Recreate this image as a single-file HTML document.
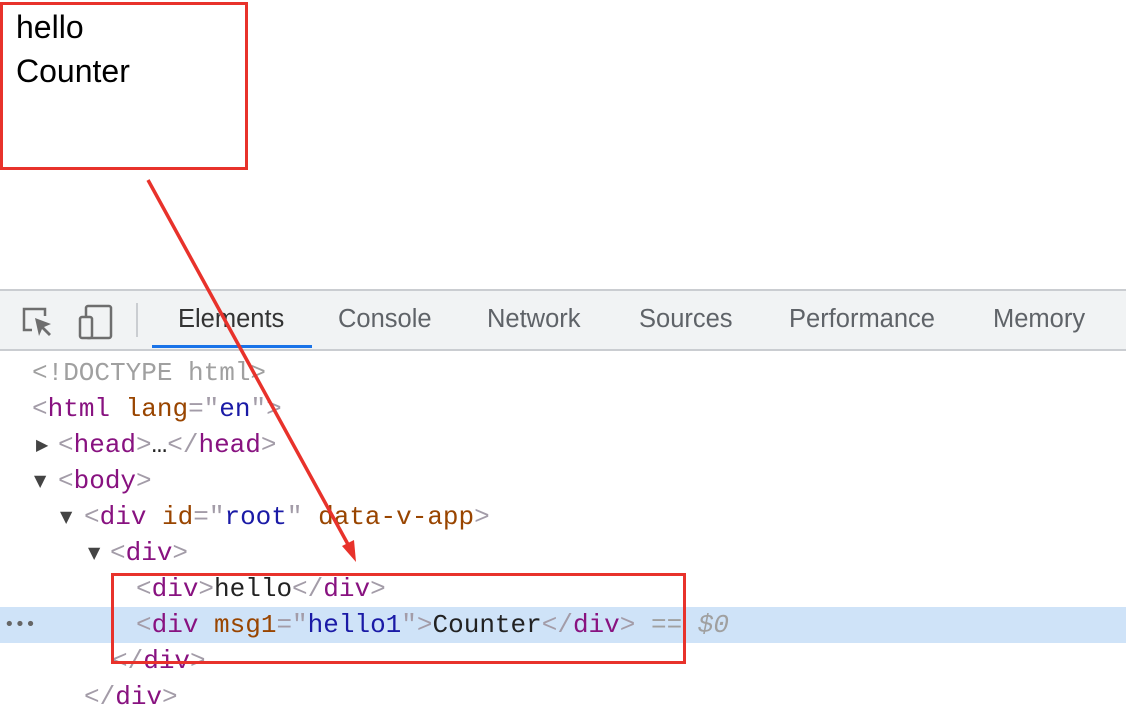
<!DOCTYPE html>
<html><head><style>
body{margin:0;width:1126px;height:720px;background:#fff;position:relative;overflow:hidden;font-family:"Liberation Sans",sans-serif}
.top{position:absolute;left:16px;top:5px;font-size:32px;line-height:44px;color:#000}
.bar{position:absolute;left:0;top:289px;width:1126px;height:58px;background:#f1f3f4;border-top:2px solid #cacdd1;border-bottom:2px solid #cacdd1}
.tab{position:absolute;top:14px;font-size:25.5px;color:#5f6368}
.code{position:absolute;left:0;top:355px;width:1126px;font-family:"Liberation Mono",monospace;font-size:26px}
.l{height:36px;line-height:36px;white-space:pre;position:relative}
.t{color:#881280}.p{color:#a39ca8}.a{color:#994500}.v{color:#1a1aa6}.x{color:#222}.g{color:#a0a0a0}
.ar{position:absolute;font-size:16px;color:#444;font-family:"DejaVu Sans",sans-serif}
</style></head><body>
<div class="top">hello<br>Counter</div>
<div class="bar">
<svg style="position:absolute;left:20px;top:14px" width="36" height="36" viewBox="0 0 36 36"><path d="M12 25H4V4h21v7" fill="none" stroke="#6e6e6e" stroke-width="2.5"/><path d="M15 13l4 18 3-7 7 7 2-2-7-7 7-3z" fill="#6e6e6e"/></svg>
<svg style="position:absolute;left:78px;top:13px" width="36" height="38" viewBox="0 0 36 38"><rect x="8" y="2" width="25" height="32" rx="2" fill="none" stroke="#6e6e6e" stroke-width="2.5"/><rect x="2" y="13" width="12" height="21" rx="2" fill="#f1f3f4" stroke="#6e6e6e" stroke-width="2.5"/></svg>
<div style="position:absolute;left:136px;top:12px;width:2px;height:34px;background:#cacdd1"></div>
<div class="tab" style="left:178px;color:#333">Elements</div>
<div style="position:absolute;left:152px;top:54px;width:160px;height:3px;background:#1a73e8"></div>
<div class="tab" style="left:338px">Console</div>
<div class="tab" style="left:487px">Network</div>
<div class="tab" style="left:639px">Sources</div>
<div class="tab" style="left:789px">Performance</div>
<div class="tab" style="left:993px">Memory</div>
</div>
<div class="code">
<div class="l" style="padding-left:32px"><span class="g">&lt;!DOCTYPE html&gt;</span></div>
<div class="l" style="padding-left:32px"><span class="p">&lt;</span><span class="t">html</span> <span class="a">lang</span><span class="p">="</span><span class="v">en</span><span class="p">"&gt;</span></div>
<div class="l" style="padding-left:58px"><span class="ar" style="left:36px">▶</span><span class="p">&lt;</span><span class="t">head</span><span class="p">&gt;</span><span class="x">…</span><span class="p">&lt;/</span><span class="t">head</span><span class="p">&gt;</span></div>
<div class="l" style="padding-left:58px"><span class="ar" style="left:34px">▼</span><span class="p">&lt;</span><span class="t">body</span><span class="p">&gt;</span></div>
<div class="l" style="padding-left:84px"><span class="ar" style="left:60px">▼</span><span class="p">&lt;</span><span class="t">div</span> <span class="a">id</span><span class="p">="</span><span class="v">root</span><span class="p">"</span> <span class="a">data-v-app</span><span class="p">&gt;</span></div>
<div class="l" style="padding-left:110px"><span class="ar" style="left:88px">▼</span><span class="p">&lt;</span><span class="t">div</span><span class="p">&gt;</span></div>
<div class="l" style="padding-left:136px"><span class="p">&lt;</span><span class="t">div</span><span class="p">&gt;</span><span class="x">hello</span><span class="p">&lt;/</span><span class="t">div</span><span class="p">&gt;</span></div>
<div class="l" style="padding-left:136px;background:#cfe3f8"><span class="ar" style="left:4px;color:#666;font-size:18px">•••</span><span class="p">&lt;</span><span class="t">div</span> <span class="a">msg1</span><span class="p">="</span><span class="v">hello1</span><span class="p">"&gt;</span><span class="x">Counter</span><span class="p">&lt;/</span><span class="t">div</span><span class="p">&gt;</span> <span class="g">== <i>$0</i></span></div>
<div class="l" style="padding-left:112px"><span class="p">&lt;/</span><span class="t">div</span><span class="p">&gt;</span></div>
<div class="l" style="padding-left:84px"><span class="p">&lt;/</span><span class="t">div</span><span class="p">&gt;</span></div>
</div>
<svg style="position:absolute;left:0;top:0" width="1126" height="720">
<rect x="1.5" y="3.5" width="245" height="165" fill="none" stroke="#e8322b" stroke-width="3"/>
<rect x="112.5" y="574.5" width="572" height="88" fill="none" stroke="#e8322b" stroke-width="3"/>
<line x1="148" y1="180" x2="350" y2="548" stroke="#e8322b" stroke-width="3.5"/>
<path d="M356 562l-14-16 12-6z" fill="#e8322b"/>
</svg>
</body></html>
